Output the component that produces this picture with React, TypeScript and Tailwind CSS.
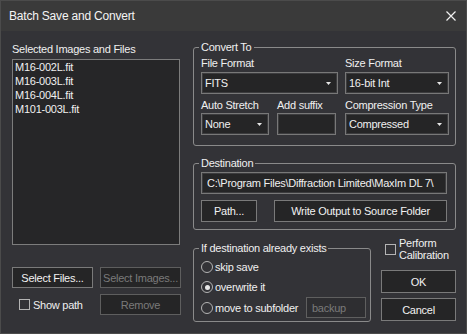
import React from "react";

function Arrow() {
  return (
    <svg width="5" height="3" viewBox="0 0 5 3" className="shrink-0">
      <path d="M0 0 H5 L2.5 3 Z" fill="#e6e6e6" />
    </svg>
  );
}

function Select({ value, w }: { value: string; w: string }) {
  return (
    <div
      className={`${w} h-[22px] border border-[#787878] bg-[#252526] shadow-[inset_0_0_0_1px_#3c3c3e] flex items-center justify-between pl-[3px] pr-[6px]`}
    >
      <span>{value}</span>
      <Arrow />
    </div>
  );
}

function Button({
  children,
  w,
  h = "h-[22px]",
  disabled = false,
}: {
  children: React.ReactNode;
  w: string;
  h?: string;
  disabled?: boolean;
}) {
  return (
    <div
      className={`${w} ${h} border ${
        disabled ? "border-[#5e5e5e] text-[#7a7a7a]" : "border-[#7a7a7a] text-[#f2f2f2]"
      } bg-[#252526] flex items-center justify-center`}
    >
      {children}
    </div>
  );
}

function Group({
  title,
  className,
  children,
}: {
  title: string;
  className: string;
  children: React.ReactNode;
}) {
  return (
    <fieldset className={`${className} border border-[#8a8a8a] rounded-[3px]`}>
      <legend className="-ml-[2px] px-[2px] leading-[14px]">{title}</legend>
      {children}
    </fieldset>
  );
}

function Radio({ checked = false }: { checked?: boolean }) {
  return (
    <span className="w-[12px] h-[12px] rounded-full border border-[#b4b4b4] flex items-center justify-center shrink-0">
      {checked && <span className="w-[5px] h-[5px] rounded-full bg-[#e8e8e8]" />}
    </span>
  );
}

function Check() {
  return <span className="w-[11px] h-[11px] border border-[#b4b4b4] shrink-0" />;
}

export default function App() {
  const files = ["M16-002L.fit", "M16-003L.fit", "M16-004L.fit", "M101-003L.fit"];
  return (
    <div className="w-[467px] h-[334px] bg-[#333337] border border-[#4b4b4b] flex flex-col text-[11px] leading-[14px] tracking-[-0.25px] text-[#f0f0f0] font-['Liberation_Sans',Arial,sans-serif]">
      {/* title bar */}
      <div className="h-[30px] bg-[#3a3a3a] flex items-center justify-between pl-[8px] pr-[10px]">
        <span className="text-[12px] tracking-[-0.2px] text-[#f4f4f4]">Batch Save and Convert</span>
        <svg width="10" height="10" viewBox="0 0 10 10">
          <path d="M0.5 0.5 L9.5 9.5 M9.5 0.5 L0.5 9.5" stroke="#f0f0f0" strokeWidth="1.2" />
        </svg>
      </div>

      <div className="flex pl-[11px]">
        {/* left column */}
        <div className="w-[169px] flex flex-col">
          <div className="mt-[11px]">Selected Images and Files</div>
          <div className="mt-[3px] w-[168px] h-[186px] border border-[#7c7c7c] bg-[#262628] pl-[2px]">
            {files.map((f) => (
              <div key={f}>{f}</div>
            ))}
          </div>
          <div className="mt-[22px] flex gap-[7px]">
            <Button w="w-[81px]" h="h-[21px]">Select Files...</Button>
            <Button w="w-[81px]" h="h-[21px]" disabled>
              Select Images...
            </Button>
          </div>
          <div className="mt-[6px] flex gap-[7px]">
            <div className="w-[81px] h-[21px] flex items-center pl-[7px] gap-[3px]">
              <Check />
              <span>Show path</span>
            </div>
            <Button w="w-[81px]" h="h-[21px]" disabled>
              Remove
            </Button>
          </div>
        </div>

        {/* right column */}
        <div className="ml-[12px] w-[263px] flex flex-col">
          <Group title="Convert To" className="mt-[9px] pl-[7px] pb-[10px]">
            <div className="mt-[2px] flex gap-[7px]">
              <div className="flex flex-col gap-[2px]">
                <span>File Format</span>
                <Select value="FITS" w="w-[137px]" />
              </div>
              <div className="flex flex-col gap-[2px]">
                <span>Size Format</span>
                <Select value="16-bit Int" w="w-[104px]" />
              </div>
            </div>
            <div className="mt-[4px] flex">
              <div className="flex flex-col gap-[1px]">
                <span>Auto Stretch</span>
                <Select value="None" w="w-[68px]" />
              </div>
              <div className="ml-[8px] flex flex-col gap-[1px]">
                <span>Add suffix</span>
                <div className="w-[59px] h-[22px] border border-[#787878] bg-[#252526] shadow-[inset_0_0_0_1px_#3c3c3e]" />
              </div>
              <div className="ml-[9px] flex flex-col gap-[1px]">
                <span>Compression Type</span>
                <Select value="Compressed" w="w-[104px]" />
              </div>
            </div>
          </Group>

          <Group title="Destination" className="mt-[10px] pl-[7px] pb-[7px]">
            <div className="mt-[2px] w-[246px] h-[22px] border border-[#787878] bg-[#252526] shadow-[inset_0_0_0_1px_#3c3c3e] flex items-center pl-[5px] overflow-hidden whitespace-nowrap">
              C:\Program Files\Diffraction Limited\MaxIm DL 7\
            </div>
            <div className="mt-[6px] flex gap-[17px]">
              <Button w="w-[56px]">Path...</Button>
              <Button w="w-[173px]">Write Output to Source Folder</Button>
            </div>
          </Group>

          <div className="flex items-start">
            <Group title="If destination already exists" className="mt-[11px] w-[178px] pl-[7px] pr-[4px] pb-[3px]">
              <div className="mt-[2px] h-[20px] flex items-center gap-[2px]">
                <Radio />
                <span>skip save</span>
              </div>
              <div className="h-[20px] flex items-center gap-[2px]">
                <Radio checked />
                <span>overwrite it</span>
              </div>
              <div className="h-[21px] flex items-center gap-[2px]">
                <Radio />
                <span>move to subfolder</span>
                <div className="ml-auto w-[60px] h-[21px] border border-[#5f5f5f] bg-[#2e2e31] text-[#7a7a7a] flex items-center pl-[5px]">
                  backup
                </div>
              </div>
            </Group>

            <div className="ml-[10px] w-[75px] flex flex-col">
              <div className="mt-[7px] flex items-center pl-[4px] gap-[3px] leading-[12px]">
                <Check />
                <span>
                  Perform
                  <br />
                  Calibration
                </span>
              </div>
              <div className="mt-[9px]">
                <Button w="w-[75px]" h="h-[23px]">OK</Button>
              </div>
              <div className="mt-[5px]">
                <Button w="w-[75px]" h="h-[23px]">Cancel</Button>
              </div>
            </div>
          </div>
        </div>
      </div>
    </div>
  );
}
